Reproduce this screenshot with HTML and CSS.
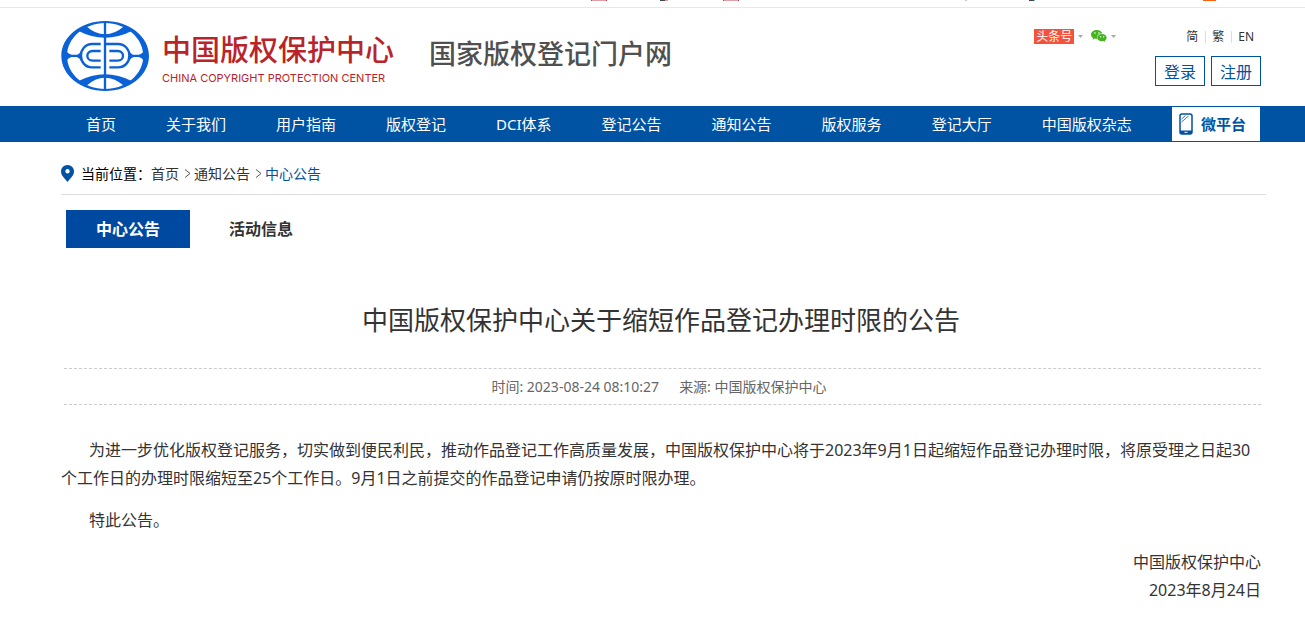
FILE: index.html
```html
<!DOCTYPE html>
<html lang="zh-CN">
<head>
<meta charset="utf-8">
<title>中国版权保护中心</title>
<link rel="stylesheet" href="styles.css">
</head>
<body>
<div class="topstrip">
  <svg width="630" height="2" viewBox="0 0 630 2" aria-hidden="true">
    <path d="M1 0h15v1h-15z" fill="#e0a0a5"/><path d="M0 0h1v1h-1zM15 0h1v1h-1z" fill="#b8404a"/>
    <path d="M69 0h5v1h-5z" fill="#45464c"/><path d="M74 0h2v1h-2z" fill="#d99a80"/><path d="M76 0h1v1h-1z" fill="#86c8e0"/>
    <path d="M133 0h15v1h-15z" fill="#e0a0a5"/><path d="M132 0h1v1h-1zM147 0h1v1h-1z" fill="#b8404a"/>
    <path d="M374 0h2v1h-2z" fill="#c8c8c8"/>
    <path d="M438 0h5v1h-5z" fill="#45464c"/><path d="M443 0h1v1h-1z" fill="#86c8e0"/>
    <path d="M612 0h13v1h-13z" fill="#ff6010"/>
  </svg>
</div>
<header class="wrap header">
  <svg class="emblem" width="89" height="72" viewBox="33 30 267 216" role="img" aria-label="中国版权保护中心">
    <g fill="#0a62d6">
      <path fill-rule="evenodd" d="M165.500 33C238 33 297 80 297 138S238 243 165.500 243 34 196 34 138 93 33 165.500 33zM165.500 39C103 39 51 84 51 138s52 99 114.500 99S280 192 280 138 228 39 165.500 39z"/>
      <path d="M90 54L108 48Q136 73 165 73T223 48L241 54L247 62Q205 83 165 83T84 62z"/>
      <path d="M90 222L108 228Q136 203 165 203T223 228L241 222L247 214Q205 193 165 193T84 214z"/>
      <path d="M48 120Q54 133 66 134H80Q88 133 93 122V153Q88 143 80 141H66Q54 142 48 156z"/>
      <path d="M283 120Q277 133 265 134H251Q243 133 238 122V153Q243 143 251 141H265Q277 142 283 156z"/>
    </g>
    <g fill="none" stroke="#0a62d6" stroke-width="7">
      <path d="M165 35V241"/>
      <path d="M152 102H126C106 102 93 118 93 137S106 172 126 172H152"/>
      <path d="M152 123H128C117 123 112 130 112 137S117 152 128 152H152"/>
      <path d="M162 102H204C225 102 238 118 238 137S225 172 204 172H178"/>
      <path d="M178 123H203C214 123 219 130 219 137S214 152 203 152H178"/>
    </g>
  </svg>
  <div class="brand">
    <div class="brand-cn">中国版权保护中心</div>
    <div class="brand-en">CHINA COPYRIGHT PROTECTION CENTER</div>
  </div>
  <div class="slogan">国家版权登记门户网</div>
  <div class="tools">
    <div class="tools-row">
      <div class="social">
        <a class="toutiao" href="#">头条号</a>
        <svg width="5" height="3" viewBox="0 0 5 3" aria-hidden="true"><path d="M0 0h5L2.500 3z" fill="#aaa"/></svg>
        <svg class="wechat" width="16" height="12" viewBox="0 0 16 12" role="img" aria-label="微信">
          <path d="M6 0C2.700 0 0 2 0 4.500c0 1.400.8 2.600 2 3.400L1.600 9.700 3.700 8.600c.7.200 1.500.3 2.300.3C5.500 5.500 8 3.400 11.300 3.300 10.700 1.400 8.600 0 6 0z" fill="#43b51f"/>
          <path d="M11 4c-2.700 0-4.800 1.600-4.800 3.700S8.300 11.300 11 11.300c.6 0 1.200-.1 1.700-.3L14.400 12l-.4-1.700c1-.6 1.600-1.600 1.600-2.600C15.600 5.600 13.600 4 11 4z" fill="#43b51f"/>
          <circle cx="4" cy="3" r=".8" fill="#fff"/><circle cx="8" cy="3" r=".8" fill="#fff"/><circle cx="9.500" cy="6.700" r=".7" fill="#fff"/><circle cx="12.600" cy="6.700" r=".7" fill="#fff"/>
        </svg>
        <svg width="5" height="3" viewBox="0 0 5 3" aria-hidden="true"><path d="M0 0h5L2.500 3z" fill="#aaa"/></svg>
      </div>
      <div class="langs"><a href="#">简</a><a href="#">繁</a><a href="#">EN</a></div>
    </div>
    <div class="account"><a href="#">登录</a><a href="#">注册</a></div>
  </div>
</header>
<nav class="nav">
  <div class="wrap nav-inner">
    <a href="#">首页</a><a href="#">关于我们</a><a href="#">用户指南</a><a href="#">版权登记</a><a href="#">DCI体系</a><a href="#">登记公告</a><a href="#">通知公告</a><a href="#">版权服务</a><a href="#">登记大厅</a><a href="#">中国版权杂志</a>
    <a class="micro" href="#">
      <svg width="14" height="22" viewBox="0 0 14 22" aria-hidden="true">
        <rect x="1" y="1" width="12" height="20" rx="2" fill="#fff" stroke="#0052a3" stroke-width="1.500"/>
        <path d="M1 17.500h12V20q0 1-1 1H2q-1 0-1-1z" fill="#0052a3"/>
        <path d="M5.500 19.300h3" stroke="#fff"/><path d="M2.500 6l4-3.500M2.500 9l7-6" stroke="#0052a3" stroke-width=".8"/>
      </svg>
      微平台
    </a>
  </div>
</nav>
<main class="wrap">
  <div class="crumbs">
    <svg class="pin" width="13" height="17" viewBox="0 0 13 17" aria-hidden="true"><path fill-rule="evenodd" d="M6.500 0A6.400 6.400 0 0 0 0 6.400C0 10.500 4 13.500 6.500 17 9 13.500 13 10.500 13 6.400A6.400 6.400 0 0 0 6.500 0zm0 4a2.200 2.200 0 1 1 0 4.400 2.200 2.200 0 0 1 0-4.400z" fill="#0052a3"/></svg>
    <span class="here">当前位置：</span>
    <a href="#">首页</a>
    <svg class="sep" width="7" height="9" viewBox="0 0 7 9" aria-hidden="true"><path d="M1 .5l5 4-5 4" fill="none" stroke="#555"/></svg>
    <a href="#">通知公告</a>
    <svg class="sep" width="7" height="9" viewBox="0 0 7 9" aria-hidden="true"><path d="M1 .5l5 4-5 4" fill="none" stroke="#555"/></svg>
    <a class="current" href="#">中心公告</a>
  </div>
  <div class="tabs"><a class="active" href="#">中心公告</a><a href="#">活动信息</a></div>
  <article>
    <h1>中国版权保护中心关于缩短作品登记办理时限的公告</h1>
    <div class="meta"><span>时间: 2023-08-24 08:10:27</span><span>来源: 中国版权保护中心</span></div>
    <div class="body">
      <p>为进一步优化版权登记服务，切实做到便民利民，推动作品登记工作高质量发展，中国版权保护中心将于2023年9月1日起缩短作品登记办理时限，将原受理之日起30个工作日的办理时限缩短至25个工作日。9月1日之前提交的作品登记申请仍按原时限办理。</p>
      <p>特此公告。</p>
      <p class="sign">中国版权保护中心<br>2023年8月24日</p>
    </div>
  </article>
</main>
</body>
</html>
```

FILE: styles.css
```css
* { box-sizing: border-box; }
body {
  margin: 0;
  background: #fff;
  color: #333;
  font: 14px/20px "Noto Sans", "Noto Sans CJK SC", sans-serif;
}
a { color: inherit; text-decoration: none; }
svg { display: block; flex: none; }
.wrap { padding: 0 44px 0 61px; }

.topstrip { height: 8px; padding-left: 591px; border-bottom: 1px solid #e8e8e8; overflow: hidden; }

.header { display: flex; align-items: flex-start; height: 98px; padding-top: 12px; }
.brand { width: 232px; margin: 10px 0 0 12px; color: #b9242b; white-space: nowrap; }
.brand-cn { font-size: 29px; line-height: 36px; font-weight: 500; font-family: "Noto Sans CJK SC", sans-serif; }
.brand-en { font: 11px/16px Inter, "Liberation Sans", sans-serif; margin-top: 4px; }
.slogan { margin: 16px 0 0 35px; font-size: 27px; line-height: 36px; font-weight: 500; color: #505050; white-space: nowrap; }
.tools { margin-left: auto; }
.tools-row { display: flex; justify-content: flex-end; align-items: center; height: 32px; font-size: 12px; }
.social { display: flex; align-items: center; gap: 4px; margin-right: 64px; }
.toutiao { background: #f4523b; color: #fff; line-height: 15px; height: 15px; padding: 0 2px; }
.wechat { margin-left: 4px; }
.langs { display: flex; line-height: 12px; padding: 1px 0 0; }
.langs a { padding: 0 7px 0 6px; }
.langs a + a { border-left: 1px solid #ddd; }
.account { display: flex; justify-content: flex-end; gap: 6px; margin-top: 4px; }
.account a { width: 50px; height: 30px; border: 1px solid #0052a3; color: #0052a3; font-size: 16px; line-height: 30px; text-align: center; }

.nav { background: #0052a3; color: #fff; font-size: 15px; }
.nav-inner { display: flex; align-items: center; height: 36px; white-space: nowrap; }
.nav-inner a { padding: 0 25px; }
.nav-inner .micro {
  display: flex; align-items: center; gap: 8px;
  width: 88px; height: 34px; margin: 0 1px 0 auto; padding: 0 0 0 7px;
  background: #fff; color: #0052a3; font-weight: 700;
}

.crumbs { display: flex; align-items: center; height: 53px; padding-top: 11px; margin-right: -5px; border-bottom: 1px solid #ddd; }
.pin { margin-right: 7px; }
.here { color: #000; }
.sep { margin: 0 3px 0 5px; }
.crumbs .current { color: #0052a3; }

.tabs { display: flex; gap: 9px; padding: 15px 0 0 5px; font-size: 16px; line-height: 38px; font-weight: 700; }
.tabs a { padding: 0 30px; }
.tabs .active { background: #0049a0; color: #fff; }

h1 { margin: 52px 0 28px; font-size: 26px; line-height: 40px; font-weight: 400; text-align: center; }
.meta {
  display: flex; justify-content: center; gap: 20px;
  margin-left: 3px; padding: 1px 7px 0 0; line-height: 34px; color: #666;
  border: dashed #ccc; border-width: 1px 0;
}
.body { padding-top: 31px; font-size: 16px; line-height: 28px; }
.body p { margin: 0 0 14px; text-indent: 28px; }
.body .sign { text-align: right; text-indent: 0; }
```
